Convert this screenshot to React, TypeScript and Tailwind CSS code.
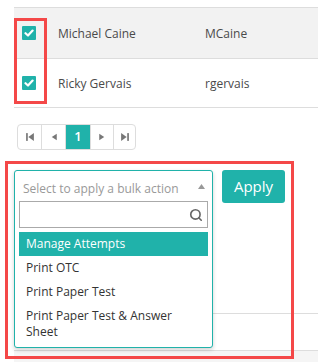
import { Search } from "lucide-react";

const rows = [
  { name: "Michael Caine", user: "MCaine", bg: "bg-[#f2f2f2]" },
  { name: "Ricky Gervais", user: "rgervais", bg: "bg-white" },
];

const options = ["Print OTC", "Print Paper Test", "Print Paper Test & Answer Sheet"];

function Check() {
  return (
    <span className="flex h-[14px] w-[14px] items-center justify-center rounded-[1px] bg-[#20b2aa]">
      <svg width="10" height="8" viewBox="0 0 10 8">
        <path d="M1.5 4.2 L4 6.5 L8.6 1.6" stroke="white" strokeWidth="2.2" fill="none" strokeLinecap="round" strokeLinejoin="round" />
      </svg>
    </span>
  );
}

function PageIcon({ kind }: { kind: string }) {
  return (
    <svg width="10" height="10" viewBox="0 0 9 9" fill="#777">
      {kind === "first" && (
        <>
          <rect x="1" y="1" width="1.5" height="7" />
          <path d="M8 1 L3 4.5 L8 8 Z" />
        </>
      )}
      {kind === "prev" && <path d="M7 1.5 L2.5 4.5 L7 7.5 Z" />}
      {kind === "next" && <path d="M2 1.5 L6.5 4.5 L2 7.5 Z" />}
      {kind === "last" && (
        <>
          <path d="M1 1 L6 4.5 L1 8 Z" />
          <rect x="6.5" y="1" width="1.5" height="7" />
        </>
      )}
    </svg>
  );
}

export default function App() {
  return (
    <div className="relative h-[362px] w-[318px] overflow-hidden bg-white font-['Open_Sans',sans-serif] text-[12px] text-[#4a4a4a]">
      <div className="pl-[14px] pt-[7px]">
        <div className="border-t border-[#dddddd]">
          {rows.map((r, i) => (
            <div
              key={r.name}
              className={`flex items-center border-b border-[#dddddd] ${r.bg} ${i === 0 ? "h-[51px]" : "h-[49px]"}`}
            >
              <div className="w-[44px] pl-[8px]">
                <Check />
              </div>
              <div className="w-[147px] pt-[1px]">{r.name}</div>
              <div className="pt-[1px]">{r.user}</div>
            </div>
          ))}
        </div>
      </div>

      <div className="ml-[17px] mt-[16px] flex h-[26px] w-[119px] overflow-hidden rounded-[4px] border border-[#dddddd]">
        <div className="flex w-[24px] items-center justify-center border-r border-[#dddddd]"><PageIcon kind="first" /></div>
        <div className="flex w-[24px] items-center justify-center border-r border-[#dddddd]"><PageIcon kind="prev" /></div>
        <div className="flex w-[24px] items-center justify-center bg-[#20b2aa] text-[13px] font-semibold text-white">1</div>
        <div className="flex w-[24px] items-center justify-center border-x border-[#dddddd]"><PageIcon kind="next" /></div>
        <div className="flex flex-1 items-center justify-center"><PageIcon kind="last" /></div>
      </div>

      <div className="relative ml-[14px] mt-[20px] flex gap-[9px]">
        <div className="h-[33px] w-[199px]" />
        <button className="h-[33px] w-[63px] rounded-[3px] bg-[#20b2aa] text-[15px] text-white">Apply</button>

        <div className="absolute left-0 top-0 z-10 w-[199px] rounded-[3px] border border-[#20b2aa] bg-white shadow-[0_2px_4px_rgba(0,0,0,0.18)]">
          <div className="flex h-[30px] items-center justify-between pl-[8px] pr-[7px] pt-[5px] text-[#999999]">
            <span>Select to apply a bulk action</span>
            <svg width="7" height="5" viewBox="0 0 7 5" fill="#999" className="mb-[4px]">
              <path d="M3.5 0 L7 5 L0 5 Z" />
            </svg>
          </div>
          <div className="px-[4px] pb-[4px]">
            <div className="flex h-[27px] items-center justify-end border border-[#aaaaaa] pr-[4px]">
              <Search size={14} strokeWidth={2.8} color="#666" />
            </div>
          </div>
          <div className="px-[4px] pb-[3px] text-[#333333]">
            <div className="flex h-[24px] items-center bg-[#20b2aa] pl-[7px] text-white">Manage Attempts</div>
            {options.map((o) => (
              <div key={o} className="py-[4px] pl-[7px] pr-[20px] leading-[16px]">{o}</div>
            ))}
          </div>
        </div>
      </div>

      <div className="ml-[14px] mt-[110px] h-[37px] border-t border-[#dddddd]" />
      <div className="ml-[14px] h-[20px] border-t border-[#dddddd] bg-[#f5f5f5]" />

      <div className="pointer-events-none absolute left-[14px] top-[18px] h-[86px] w-[33px] border-[3px] border-[#f44848]" />
      <div className="pointer-events-none absolute left-[5px] top-[161px] z-20 h-[198px] w-[289px] border-[3px] border-[#f44848]" />
    </div>
  );
}
